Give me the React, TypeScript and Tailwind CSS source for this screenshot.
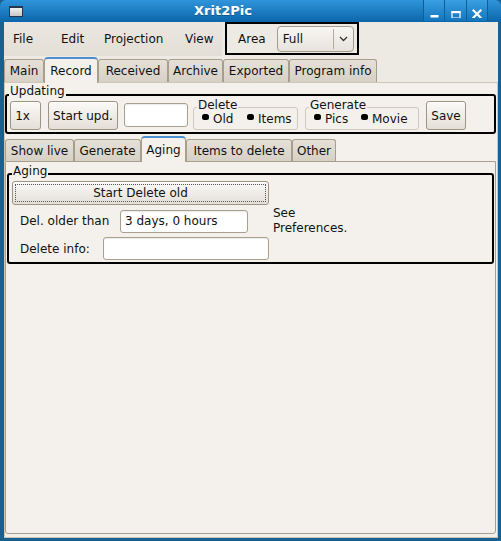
import React from 'react';

// Xrit2Pic main window, "Record" page with the "Aging" sub tab open

const outerTabs: [string, number][] = [
  ['Main', 40],
  ['Record', 54],
  ['Received', 70],
  ['Archive', 55],
  ['Exported', 66],
  ['Program info', 88],
];

const innerTabs: [string, number][] = [
  ['Show live', 69],
  ['Generate', 67],
  ['Aging', 45],
  ['Items to delete', 106],
  ['Other', 44],
];

function Button({ children, className = '' }: { children: React.ReactNode; className?: string }) {
  return (
    <div
      className={`flex items-center justify-center rounded-[3px] border border-[#9e9484] bg-gradient-to-b from-[#fbfaf8] to-[#e4dfd7] shadow-[inset_0_1px_0_#ffffff] ${className}`}
    >
      {children}
    </div>
  );
}

function Field({ value = '', className = '' }: { value?: string; className?: string }) {
  return (
    <div
      className={`flex items-center rounded-[3px] border border-[#a99f8f] bg-white px-[4px] shadow-[inset_0_1px_1px_rgba(0,0,0,0.08)] ${className}`}
    >
      {value}
    </div>
  );
}

function Tabs({
  tabs,
  active,
  rowH,
  tabH,
  activeH,
}: {
  tabs: [string, number][];
  active: string;
  rowH: string;
  tabH: string;
  activeH: string;
}) {
  return (
    <div className={`flex items-end ${rowH}`}>
      {tabs.map(([name, w]) =>
        name === active ? (
          <div
            key={name}
            style={{ width: w }}
            className={`relative z-10 mb-[-1px] flex ${activeH} items-center justify-center rounded-t-[4px] border-x border-t-2 border-x-[#a89e8e] border-t-[#4c8fd2] bg-[#f4f1ec] pb-[1px]`}
          >
            {name}
          </div>
        ) : (
          <div
            key={name}
            style={{ width: w }}
            className={`flex ${tabH} items-center justify-center rounded-t-[3px] border-x border-t border-[#a89e8e] bg-gradient-to-b from-[#e6e1d8] to-[#d6d0c5]`}
          >
            {name}
          </div>
        ),
      )}
    </div>
  );
}

function RadioFrame({
  label,
  items,
  first,
  className = '',
}: {
  label: string;
  items: string[];
  first: number;
  className?: string;
}) {
  return (
    <div className={`relative h-[23px] rounded-[3px] border border-[#cfc8bc] pl-[8px] pt-[4px] ${className}`}>
      <span className="absolute left-[3px] top-[-9px] bg-[#f4f1ec] px-[1px] leading-[13px]">{label}</span>
      <div className="flex">
        {items.map((it, i) => (
          <div key={it} className="flex items-start" style={i === 0 ? { width: first } : undefined}>
            <span className="mt-[2px] h-[6px] w-[7px] rounded-[2.5px] bg-black" />
            <span className="ml-[4px] mt-[1px] leading-[13px]">{it}</span>
          </div>
        ))}
      </div>
    </div>
  );
}

function TitleBar() {
  return (
    <div className="flex h-[22px] items-center rounded-t-[6px] bg-gradient-to-b from-[#2f95dc] to-[#0b66a9] text-white">
      <div className="ml-[9px] h-[11px] w-[14px] border border-t-2 border-[#23384d] bg-gradient-to-b from-[#f0f0f0] to-[#c8c8c8]" />
      <div className="flex-1 text-center text-[13px] font-bold [text-shadow:0_1px_0_rgba(0,0,0,0.25)]">Xrit2Pic</div>
      <div className="flex h-[21px] self-start">
        <div className="flex w-[22px] items-center justify-center border-x border-[#0d5f9c] bg-gradient-to-b from-[#3a9fe2] to-[#1276bd]">
          <svg width="9" height="14" viewBox="0 0 9 14">
            <rect x="0.5" y="11" width="8" height="2.5" fill="#fff" />
          </svg>
        </div>
        <div className="flex w-[22px] items-center justify-center border-r border-[#0d5f9c] bg-gradient-to-b from-[#3a9fe2] to-[#1276bd]">
          <svg width="10" height="14" viewBox="0 0 10 14">
            <path d="M1 7.5h8v6.5H1z" fill="none" stroke="#fff" strokeWidth="1.2" />
            <rect x="0.5" y="7" width="9" height="2.2" fill="#fff" />
          </svg>
        </div>
        <div className="flex w-[21px] items-center justify-center border-r border-[#0d5f9c] bg-gradient-to-b from-[#3a9fe2] to-[#1276bd]">
          <svg width="10" height="14" viewBox="0 0 10 14">
            <path d="M1.5 6.5l7 7M8.5 6.5l-7 7" stroke="#fff" strokeWidth="2.2" strokeLinecap="square" />
          </svg>
        </div>
      </div>
      <div className="w-[13px]" />
    </div>
  );
}

export default function App() {
  return (
    <div className="flex h-[541px] w-[501px] flex-col overflow-hidden bg-[#17608f] font-['DejaVu_Sans',Verdana,sans-serif] text-[12px] text-[#111]">
      <TitleBar />

      <div className="mb-[3px] ml-[4px] mr-[3px] flex flex-1 flex-col bg-[#edeae4]">
        {/* menu bar + area chooser */}
        <div className="flex h-[34px]">
          <div className="flex w-[218px] items-center bg-gradient-to-b from-[#ebe7e0] to-[#e3dfd7]">
            <span className="w-[48px] pl-[9px]">File</span>
            <span className="w-[43px] pl-[9px]">Edit</span>
            <span className="w-[81px] pl-[9px]">Projection</span>
            <span className="pl-[9px]">View</span>
          </div>
          <div className="ml-[3px] flex h-[33px] w-[134px] items-center border-2 border-black pl-[11px]">
            <span>Area</span>
            <div className="ml-[11px] flex h-[26px] w-[77px] items-center rounded-[4px] border border-[#a69c8c] bg-gradient-to-b from-[#f8f6f3] to-[#e7e3dc]">
              <span className="flex-1 pl-[5px]">Full</span>
              <div className="h-[20px] w-px bg-[#b3aa9c]" />
              <svg className="mx-[5px]" width="9" height="6" viewBox="0 0 9 6">
                <path d="M1 1l3.5 3.5L8 1" fill="none" stroke="#333" strokeWidth="1.3" />
              </svg>
            </div>
          </div>
        </div>

        <Tabs tabs={outerTabs} active="Record" rowH="h-[26px]" tabH="h-[23px]" activeH="h-[26px]" />

        <div className="flex flex-1 flex-col border border-[#cdc5b8] bg-[#f4f1ec] pb-[3px] pr-[1px]">
          {/* Updating */}
          <div className="relative mt-[11px] h-[40px] rounded-[3px] border-2 border-black">
            <span className="absolute left-[2px] top-[-11px] bg-[#f4f1ec] px-[1px] leading-[13px]">Updating</span>
            <div className="flex items-start pl-[3px] pt-[5px]">
              <Button className="h-[29px] w-[31px] pr-[6px]">1x</Button>
              <Button className="ml-[7px] h-[29px] w-[70px] from-[#efece7] to-[#dcd7ce]">Start upd.</Button>
              <Field className="ml-[6px] mt-[2px] h-[24px] w-[64px]" />
              <RadioFrame className="ml-[5px] mt-[6px] w-[105px]" label="Delete" items={['Old', 'Items']} first={45} />
              <RadioFrame className="ml-[7px] mt-[6px] w-[114px]" label="Generate" items={['Pics', 'Movie']} first={47} />
              <Button className="ml-[7px] h-[29px] w-[40px]">Save</Button>
            </div>
          </div>

          <Tabs tabs={innerTabs} active="Aging" rowH="h-[27px]" tabH="h-[22px]" activeH="h-[26px]" />

          <div className="flex-1 rounded-b-[3px] border border-[#a89e8e] bg-[#f4f1ec] px-px">
            {/* Aging */}
            <div className="relative mt-[11px] rounded-[3px] border-2 border-black pb-[2px] pl-[3px] pt-[6px]">
              <span className="absolute left-[3px] top-[-10px] bg-[#f4f1ec] px-[1px] leading-[13px]">Aging</span>
              <Button className="h-[24px] w-[257px] from-[#f7f6f4] to-[#e2ded6] outline-1 outline-offset-[-4px] outline-[#555] outline-dotted">
                Start Delete old
              </Button>
              <div className="mt-[1px] flex items-center">
                <span className="w-[108px] pl-[8px]">Del. older than</span>
                <Field className="h-[23px] w-[128px]" value="3 days, 0 hours" />
                <div className="ml-[25px] leading-[15px]">
                  <div>See</div>
                  <div>Preferences.</div>
                </div>
              </div>
              <div className="mt-[1px] flex items-center">
                <span className="w-[91px] pl-[8px]">Delete info:</span>
                <Field className="h-[23px] w-[166px]" />
              </div>
            </div>
          </div>
        </div>
      </div>
    </div>
  );
}
